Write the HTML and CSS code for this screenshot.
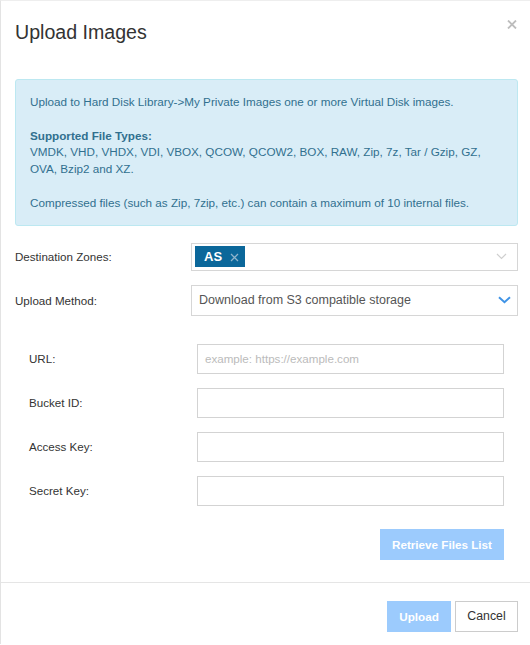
FILE: index.html
```html
<!DOCTYPE html>
<html>
<head>
<meta charset="utf-8">
<link rel="stylesheet" href="styles.css">
</head>
<body>
<div class="modal">
  <div class="modal-header">
    <h4 class="modal-title">Upload Images</h4>
    <span class="close"><svg width="10" height="9" viewBox="0 0 10 9"><path d="M1 0.5 L9 8.5 M9 0.5 L1 8.5" stroke="#bdbdbd" stroke-width="1.8" fill="none"/></svg></span>
  </div>
  <div class="modal-body">
    <div class="alert">
      <p>Upload to Hard Disk Library-&gt;My Private Images one or more Virtual Disk images.</p>
      <p><strong>Supported File Types:</strong><br>VMDK, VHD, VHDX, VDI, VBOX, QCOW, QCOW2, BOX, RAW, Zip, 7z, Tar / Gzip, GZ, OVA, Bzip2 and XZ.</p>
      <p>Compressed files (such as Zip, 7zip, etc.) can contain a maximum of 10 internal files.</p>
    </div>
    <div class="form">
      <div class="row row-zones">
        <label class="label">Destination Zones:</label>
        <div class="select select-multi">
          <span class="tag">AS <svg class="tag-x" width="9" height="9" viewBox="0 0 9 9"><path d="M1 1 L8 8 M8 1 L1 8" stroke="#8fb4cc" stroke-width="1.3" fill="none"/></svg></span>
          <svg class="chev" width="11" height="7" viewBox="0 0 11 7"><path d="M1 1 L5.5 5.5 L10 1" stroke="#cfcfcf" stroke-width="1.2" fill="none"/></svg>
        </div>
      </div>
      <div class="row row-method">
        <label class="label">Upload Method:</label>
        <div class="select select-single">
          <span class="select-text">Download from S3 compatible storage</span>
          <svg class="chev" width="13" height="8" viewBox="0 0 13 8"><path d="M1 1.2 L6.5 6.2 L12 1.2" stroke="#3f93e6" stroke-width="2" fill="none"/></svg>
        </div>
      </div>
      <div class="subform">
        <div class="row sub-row">
          <label class="label sub-label">URL:</label>
          <div class="input"><span class="placeholder">example: https://example.com</span></div>
        </div>
        <div class="row sub-row">
          <label class="label sub-label">Bucket ID:</label>
          <div class="input"></div>
        </div>
        <div class="row sub-row">
          <label class="label sub-label">Access Key:</label>
          <div class="input"></div>
        </div>
        <div class="row sub-row">
          <label class="label sub-label">Secret Key:</label>
          <div class="input"></div>
        </div>
        <div class="retrieve-wrap">
          <button class="btn btn-primary btn-retrieve">Retrieve Files List</button>
        </div>
      </div>
    </div>
  </div>
  <div class="modal-footer">
    <button class="btn btn-primary btn-upload">Upload</button>
    <button class="btn btn-default">Cancel</button>
  </div>
</div>
</body>
</html>
```

FILE: styles.css
```css
html, body {
  margin: 0;
  padding: 0;
  background: #fff;
}
body {
  font-family: "Liberation Sans", Arial, sans-serif;
  font-size: 11.7px;
  color: #333;
}
.modal {
  border-left: 1px solid #e3e3e3;
  border-top: 1px solid #eeeeee;
  min-height: 644px;
  box-sizing: border-box;
}
.modal-header {
  position: relative;
  padding: 15px 14px 15px 14px;
}
.modal-title {
  margin: 0;
  font-size: 19.6px;
  font-weight: normal;
  line-height: 32px;
  color: #333;
}
.close {
  position: absolute;
  top: 19px;
  right: 13px;
  width: 10px;
  height: 9px;
  line-height: 0;
}
.modal-body {
  padding: 16px 12px 22px 14px;
}
.alert {
  background: #d9edf7;
  border: 1px solid #bce8f1;
  border-radius: 3px;
  color: #31708f;
  padding: 14px 14px 13px 14px;
  line-height: 16.8px;
  font-size: 11.7px;
}
.alert p {
  margin: 0 0 16.8px 0;
}
.alert p:last-child {
  margin-bottom: 0;
}
.alert strong {
  font-weight: bold;
}
.form {
  margin-top: 17px;
}
.row {
  display: flex;
  align-items: center;
}
.label {
  width: 176px;
  flex: none;
  color: #333;
  font-size: 11.6px;
}
.row-method {
  margin-top: 14px;
}
.select {
  flex: 1;
  box-sizing: border-box;
  border: 1px solid #d6d6d6;
  background: #fff;
  display: flex;
  align-items: center;
  position: relative;
}
.select-multi {
  height: 28px;
  padding: 0 10px 0 3px;
}
.select-single {
  height: 31px;
  padding: 0 6px 0 7px;
}
.select-text {
  flex: 1;
  font-size: 12.5px;
  color: #555;
}
.tag {
  background: #0b679a;
  color: #fff;
  font-weight: bold;
  font-size: 13px;
  height: 21px;
  width: 50px;
  box-sizing: border-box;
  padding: 0 0 0 9px;
  display: flex;
  align-items: center;
  gap: 8px;
}
.tag-x {
  margin-top: 1px;
}
.select-multi .chev {
  margin-left: auto;
}
.subform {
  margin-top: 28px;
  padding: 0 14px 0 14px;
}
.sub-row {
  margin-bottom: 14px;
}
.sub-label {
  width: 168px;
}
.input {
  flex: 1;
  height: 30px;
  box-sizing: border-box;
  border: 1px solid #d3d3d3;
  display: flex;
  align-items: center;
  padding-left: 7px;
}
.placeholder {
  color: #bbb;
  font-size: 11.6px;
}
.retrieve-wrap {
  display: flex;
  justify-content: flex-end;
  margin-top: 23px;
}
.btn {
  font-family: "Liberation Sans", Arial, sans-serif;
  font-size: 11.7px;
  height: 31px;
  box-sizing: border-box;
  border: 1px solid transparent;
  padding: 0;
  cursor: default;
}
.btn-primary {
  background: #9ccbfd;
  color: #fff;
  font-weight: bold;
  border-color: #9ccbfd;
}
.btn-retrieve {
  width: 124px;
}
.modal-footer {
  border-top: 1px solid #e5e5e5;
  padding: 18px 12px 12px 14px;
  display: flex;
  justify-content: flex-end;
  gap: 4px;
}
.btn-upload {
  width: 64px;
}
.btn-default {
  width: 63px;
  background: #fff;
  border: 1px solid #cccccc;
  color: #333;
  font-size: 12.3px;
}
```
